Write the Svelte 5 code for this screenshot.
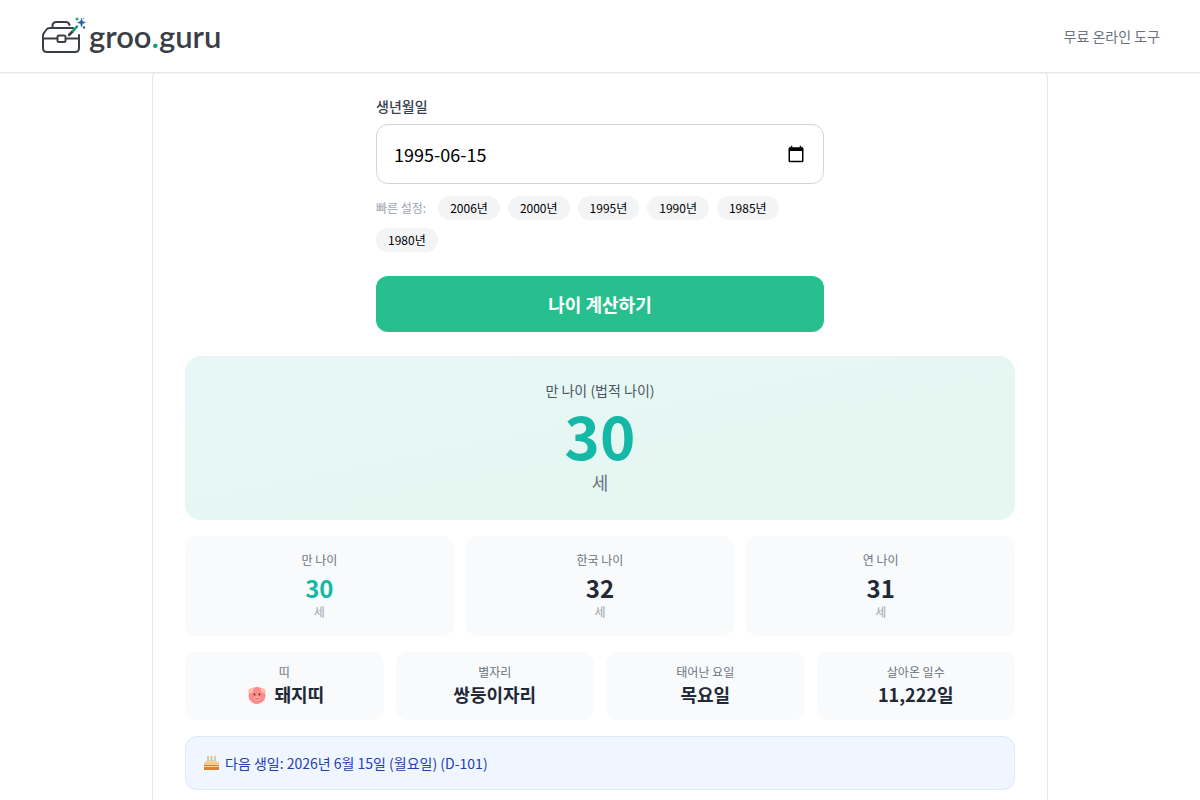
<script lang="ts">
	let birthDate: string = $state('1995-06-15');

	const years: number[] = [2006, 2000, 1995, 1990, 1985, 1980];

	const ages = [
		{ label: '만 나이', value: 30, accent: true },
		{ label: '한국 나이', value: 32, accent: false },
		{ label: '연 나이', value: 31, accent: false }
	];

	const facts = [
		{ label: '띠', value: '돼지띠', pig: true },
		{ label: '별자리', value: '쌍둥이자리', pig: false },
		{ label: '태어난 요일', value: '목요일', pig: false },
		{ label: '살아온 일수', value: '11,222일', pig: false }
	];

	// keep month and day, only swap the year
	function setYear(year: number) {
		birthDate = `${year}-${birthDate.slice(5) || '01-01'}`;
	}
</script>

<header>
	<a class="logo" href="/" aria-label="groo.guru">
		<svg class="toolbox" width="46" height="38" viewBox="0 0 46 38" fill="none" stroke="#3a3f47" stroke-width="2" stroke-linecap="round" stroke-linejoin="round">
			<path d="M31 11H8q-2.500 0-3.500 1.500L2 16q-1 1-1 3v12q0 4 4 4h28q4 0 4-4V18" />
			<path d="M10.500 10.500V9q0-4 4-4h9q3.500 0 4 3" />
			<path d="M1.500 21.500H15M24 21.500h13" />
			<rect x="15.500" y="18.500" width="8" height="6.500" rx="1.500" />
			<path d="M27 18l4-4" stroke-width="2.500" />
			<path d="M31 14l4-4.500" stroke="#159a80" stroke-width="2.500" />
			<path d="M39.500 1.500l1 3 3 1-3 1-1 3.500-1-3.500-3-1 3-1z" fill="#235b9b" stroke="#235b9b" stroke-width="0.500" />
			<circle cx="35" cy="2" r="1.500" fill="#27a58a" stroke="none" />
			<circle cx="42" cy="10.500" r="1.300" fill="#59636e" stroke="none" />
			<circle cx="41.500" cy="1.500" r="0.800" fill="#62bda9" stroke="none" />
		</svg>
		<span class="wordmark">groo<span class="dot">.</span>guru</span>
	</a>
	<a class="tagline" href="/">무료 온라인 도구</a>
</header>

<main>
	<section class="card">
		<div class="form">
			<label for="birth">생년월일</label>
			<div class="date-field">
				<input id="birth" type="text" inputmode="numeric" bind:value={birthDate} />
				<button type="button" class="picker" aria-label="달력 열기">
					<svg width="18" height="18" viewBox="0 0 24 24">
						<path fill="#000" d="M20 3h-1V1h-2v2H7V1H5v2H4c-1.100 0-2 .9-2 2v16c0 1.100.9 2 2 2h16c1.100 0 2-.9 2-2V5c0-1.100-.9-2-2-2zm0 18H4V8h16v13z" />
					</svg>
				</button>
			</div>
			<div class="quick">
				<span class="quick-label">빠른 설정:</span>
				{#each years as year}
					<button type="button" class="chip" onclick={() => setYear(year)}>{year}년</button>
				{/each}
			</div>
			<button type="button" class="submit">나이 계산하기</button>
		</div>

		<div class="hero">
			<p class="hero-label">만 나이 (법적 나이)</p>
			<p class="hero-value">30</p>
			<p class="hero-unit">세</p>
		</div>

		<div class="ages">
			{#each ages as age}
				<div class="age">
					<p class="small">{age.label}</p>
					<p class="age-value" class:accent={age.accent}>{age.value}</p>
					<p class="small unit">세</p>
				</div>
			{/each}
		</div>

		<div class="facts">
			{#each facts as fact}
				<div class="fact">
					<p class="small">{fact.label}</p>
					<p class="fact-value">
						{#if fact.pig}
							<svg width="22" height="20" viewBox="0 0 22 20" aria-hidden="true">
								<g transform="translate(4 2)">
									<ellipse cx="9" cy="9.500" rx="8.500" ry="8.500" fill="#ff8a8c" />
									<path d="M1 3q3-2 5 0-1 3-3 4Q0 7 0 5z" fill="#ffbfad" />
									<path d="M17 3q-3-2-5 0 1 3 3 4 3 0 3-2z" fill="#ffbfad" />
									<circle cx="6.500" cy="8.500" r="0.900" fill="#3c2b30" />
									<circle cx="11.500" cy="8.500" r="0.900" fill="#3c2b30" />
									<ellipse cx="9" cy="12.500" rx="3" ry="2" fill="#ffb3a5" />
									<circle cx="8" cy="12.500" r="0.700" fill="#a94650" />
									<circle cx="10" cy="12.500" r="0.700" fill="#a94650" />
								</g>
							</svg>
						{/if}
						<span>{fact.value}</span>
					</p>
				</div>
			{/each}
		</div>

		<div class="birthday">
			<svg width="15" height="16" viewBox="0 0 15 16" aria-hidden="true">
				<path d="M1 8q0-3 6.500-3T14 8v3H1z" fill="#ffd495" />
				<path d="M4 3v3M7.500 3v3M11 3v3" stroke="#6ed0d5" stroke-width="1.300" />
				<path d="M4 1v2M7.500 1v2M11 1v2" stroke="#f7b52c" stroke-width="1.500" />
				<rect y="7" width="15" height="4" rx="1" fill="#f8cc8e" />
				<path d="M0 10h15v5H0z" fill="#d78436" />
				<path d="M0 11.500h15" stroke="#f6d4a2" />
			</svg>
			<span>다음 생일: 2026년 6월 15일 (월요일) (D-101)</span>
		</div>
	</section>
</main>

<style>
	:global(body) {
		margin: 0;
		background: #fff;
		color: #1f2937;
		font-family: "Noto Sans CJK KR", sans-serif;
	}

	header {
		position: sticky;
		top: 0;
		z-index: 10;
		display: flex;
		align-items: center;
		justify-content: space-between;
		height: 72px;
		padding: 0 40px;
		background: #fff;
		border-bottom: 1px solid #e5e7eb;
		box-shadow: 0 1px 2px rgba(0, 0, 0, 0.05);
	}

	a {
		text-decoration: none;
	}

	.logo {
		display: flex;
		align-items: center;
		gap: 1px;
		padding-left: 2px;
	}

	.wordmark {
		color: #3a3f47;
		font-family: Lato, sans-serif;
		font-size: 31px;
		font-weight: 600;
		line-height: 40px;
	}

	.dot {
		color: #159a80;
	}

	.tagline {
		color: #6b7280;
		font-size: 14px;
		line-height: 20px;
	}

	main {
		max-width: 896px;
		margin: -10px auto 0;
	}

	.card {
		padding: 32px;
		border: 1px solid #e5e7eb;
		border-radius: 16px;
		background: #fff;
	}

	.form {
		max-width: 448px;
		margin: 0 auto 24px;
	}

	label {
		display: block;
		margin-bottom: 8px;
		color: #374151;
		font-size: 14px;
		font-weight: 500;
		line-height: 20px;
	}

	.date-field {
		display: flex;
		align-items: center;
		padding: 15px 18px 15px 17px;
		border: 1px solid #d1d5db;
		border-radius: 12px;
	}

	input {
		flex: 1;
		min-width: 0;
		height: 28px;
		padding: 0;
		border: 0;
		outline: 0;
		background: transparent;
		color: #000;
		font-family: inherit;
		font-size: 18px;
		line-height: 28px;
	}

	button {
		border: 0;
		font-family: inherit;
		cursor: pointer;
	}

	.picker {
		display: flex;
		padding: 0;
		background: none;
	}

	.quick {
		display: flex;
		flex-wrap: wrap;
		align-items: center;
		gap: 8px;
		margin: 12px 0 24px;
	}

	.quick-label {
		margin-right: 4px;
		color: #9ca3af;
		font-size: 12px;
		line-height: 16px;
	}

	.chip {
		padding: 4px 12px;
		border-radius: 12px;
		background: #f3f4f6;
		color: #000;
		font-size: 12px;
		line-height: 16px;
	}

	.submit {
		width: 100%;
		padding: 14px;
		border-radius: 12px;
		background: #28bf8f;
		color: #fff;
		font-size: 18px;
		font-weight: 700;
		line-height: 28px;
	}

	p {
		margin: 0;
	}

	.hero {
		padding: 24px;
		border-radius: 16px;
		background: linear-gradient(to bottom right, #e7f7f6, #e5f7f0);
		text-align: center;
	}

	.hero-label {
		margin-bottom: 4px;
		color: #4b5563;
		font-size: 14px;
		line-height: 20px;
	}

	.hero-value {
		margin-bottom: 4px;
		color: #14b8a6;
		font-size: 60px;
		font-weight: 700;
		line-height: 60px;
	}

	.hero-unit {
		color: #6b7280;
		font-size: 18px;
		line-height: 28px;
	}

	.ages,
	.facts {
		display: grid;
		grid-template-columns: repeat(3, 1fr);
		gap: 12px;
		margin-top: 16px;
		text-align: center;
	}

	.facts {
		grid-template-columns: repeat(4, 1fr);
	}

	.age,
	.fact {
		padding: 16px;
		border-radius: 12px;
		background: #f9fafb;
	}

	.fact {
		padding: 12px;
	}

	.small {
		color: #6b7280;
		font-size: 12px;
		line-height: 16px;
	}

	.unit {
		color: #9ca3af;
	}

	.age-value {
		margin-top: 4px;
		font-size: 24px;
		font-weight: 700;
		line-height: 32px;
	}

	.accent {
		color: #14b8a6;
	}

	.fact-value {
		display: flex;
		align-items: center;
		justify-content: center;
		gap: 8px;
		font-size: 18px;
		font-weight: 700;
		line-height: 28px;
	}

	.birthday {
		display: flex;
		align-items: center;
		gap: 6px;
		margin-top: 16px;
		padding: 16px 18px;
		border: 1px solid #dbeafe;
		border-radius: 12px;
		background: #eff6ff;
		color: #1e40af;
		font-size: 14px;
		line-height: 20px;
	}
</style>
